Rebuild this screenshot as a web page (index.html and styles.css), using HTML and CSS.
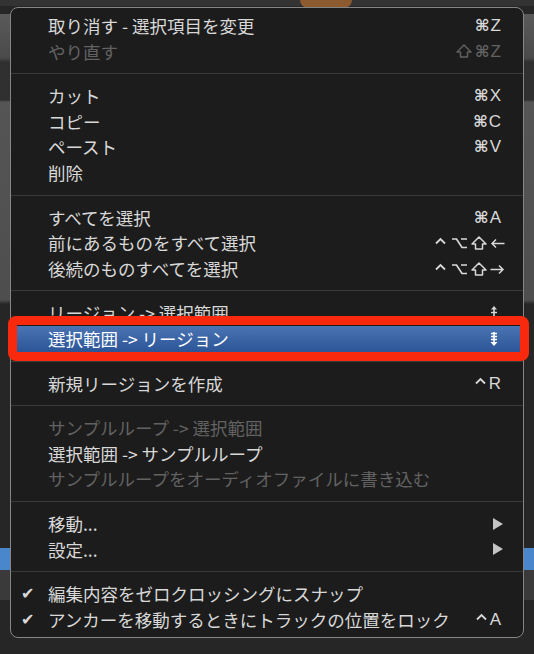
FILE: index.html
```html
<!DOCTYPE html>
<html lang="ja">
<head>
    <meta charset="UTF-8">
    <meta name="viewport" content="width=device-width, initial-scale=1.0">
    <title>編集メニュー</title>
    <link rel="stylesheet" href="styles.css">
</head>
<body>
    <div class="stage">
        <div class="blob"></div>

        <!-- EDIT MENU -->
        <div class="menu">
            <div class="row"><span class="label">取り消す - 選択項目を変更</span><span class="key"><span class="cmd">⌘</span>Z</span></div>
            <div class="row off">
                <span class="label">やり直す</span>
                <span class="key">
                    <svg class="mod" width="16" height="14" viewBox="0 0 16 14"><path d="M8 1 L15 8 H11.5 V13 H4.5 V8 H1 Z" fill="none" stroke="currentColor" stroke-width="1.4" stroke-linejoin="round"/></svg><span class="cmd">⌘</span>Z
                </span>
            </div>
            <div class="sep"></div>

            <div class="row"><span class="label">カット</span><span class="key"><span class="cmd">⌘</span>X</span></div>
            <div class="row"><span class="label">コピー</span><span class="key"><span class="cmd">⌘</span>C</span></div>
            <div class="row"><span class="label">ペースト</span><span class="key"><span class="cmd">⌘</span>V</span></div>
            <div class="row"><span class="label">削除</span></div>
            <div class="sep"></div>

            <div class="row"><span class="label">すべてを選択</span><span class="key"><span class="cmd">⌘</span>A</span></div>
            <div class="row">
                <span class="label">前にあるものをすべて選択</span>
                <span class="key arrows">
                    <svg class="mod ctl" width="11" height="14" viewBox="0 0 11 14"><path d="M1 7.5 L5.5 3 L10 7.5" fill="none" stroke="currentColor" stroke-width="1.8"/></svg>
                    <svg class="mod" width="17" height="14" viewBox="0 0 17 14"><path d="M1 3 H5.5 L11 11.5 H16 M10 3 H16" fill="none" stroke="currentColor" stroke-width="1.7"/></svg>
                    <svg class="mod" width="16" height="14" viewBox="0 0 16 14"><path d="M8 1 L15 8 H11.5 V13 H4.5 V8 H1 Z" fill="none" stroke="currentColor" stroke-width="1.5" stroke-linejoin="round"/></svg>
                    <svg class="mod" width="15" height="14" viewBox="0 0 15 14"><path d="M14.5 7.5 H2 M6 3.5 L2 7.5 L6 11.5" fill="none" stroke="currentColor" stroke-width="1.5"/></svg>
                </span>
            </div>
            <div class="row">
                <span class="label">後続のものすべてを選択</span>
                <span class="key arrows">
                    <svg class="mod ctl" width="11" height="14" viewBox="0 0 11 14"><path d="M1 7.5 L5.5 3 L10 7.5" fill="none" stroke="currentColor" stroke-width="1.8"/></svg>
                    <svg class="mod" width="17" height="14" viewBox="0 0 17 14"><path d="M1 3 H5.5 L11 11.5 H16 M10 3 H16" fill="none" stroke="currentColor" stroke-width="1.7"/></svg>
                    <svg class="mod" width="16" height="14" viewBox="0 0 16 14"><path d="M8 1 L15 8 H11.5 V13 H4.5 V8 H1 Z" fill="none" stroke="currentColor" stroke-width="1.5" stroke-linejoin="round"/></svg>
                    <svg class="mod" width="15" height="14" viewBox="0 0 15 14"><path d="M0.5 7.5 H13 M9 3.5 L13 7.5 L9 11.5" fill="none" stroke="currentColor" stroke-width="1.5"/></svg>
                </span>
            </div>
            <div class="sep"></div>

            <div class="row">
                <span class="label">リージョン -&gt; 選択範囲</span>
                <svg class="glyph" width="8" height="14" viewBox="0 0 8 14">
                    <path d="M4 0 L7 3.5 H1 Z" fill="currentColor"/>
                    <path d="M4 3 V11" stroke="currentColor" stroke-width="1.6"/>
                    <path d="M1 6.5 H7" stroke="currentColor" stroke-width="1.4"/>
                    <path d="M4 14 L7 10.5 H1 Z" fill="currentColor"/>
                </svg>
            </div>
            <div class="row hl">
                <span class="label">選択範囲 -&gt; リージョン</span>
                <svg class="glyph" width="8" height="14" viewBox="0 0 8 14">
                    <path d="M4 0 V11" stroke="currentColor" stroke-width="1.6"/>
                    <path d="M1 1.5 H7 M1 4.5 H7 M1 7.5 H7" stroke="currentColor" stroke-width="1.4"/>
                    <path d="M4 14 L7.5 10 H0.5 Z" fill="currentColor"/>
                </svg>
            </div>
            <div class="sep"></div>

            <div class="row">
                <span class="label">新規リージョンを作成</span>
                <span class="key"><svg class="mod ctl" width="11" height="14" viewBox="0 0 11 14"><path d="M1 7.5 L5.5 3 L10 7.5" fill="none" stroke="currentColor" stroke-width="1.8"/></svg>R</span>
            </div>
            <div class="sep"></div>

            <div class="row off"><span class="label">サンプルループ -&gt; 選択範囲</span></div>
            <div class="row"><span class="label">選択範囲 -&gt; サンプルループ</span></div>
            <div class="row off"><span class="label">サンプルループをオーディオファイルに書き込む</span></div>
            <div class="sep"></div>

            <div class="row"><span class="label">移動...</span><span class="sub"></span></div>
            <div class="row"><span class="label">設定...</span><span class="sub"></span></div>
            <div class="sep"></div>

            <div class="row"><span class="check">✔</span><span class="label">編集内容をゼロクロッシングにスナップ</span></div>
            <div class="row">
                <span class="check">✔</span>
                <span class="label">アンカーを移動するときにトラックの位置をロック</span>
                <span class="key"><svg class="mod ctl" width="11" height="14" viewBox="0 0 11 14"><path d="M1 7.5 L5.5 3 L10 7.5" fill="none" stroke="currentColor" stroke-width="1.8"/></svg>A</span>
            </div>
        </div>
    </div>
</body>
</html>
```

FILE: styles.css
```css
* { margin: 0; padding: 0; box-sizing: border-box; }
body {
    background: #262626;
    font-family: "Noto Sans CJK JP", "Noto Sans", sans-serif;
}
.stage {
    position: relative;
    width: 534px;
    height: 654px;
    overflow: hidden;
    padding: 7px 0 0 10px;
    background:
        linear-gradient(to bottom, transparent 548px, #4a86cc 548px, #4a86cc 570px, #3a3a3a 570px, #3a3a3a 600px, transparent 600px),
        linear-gradient(to bottom, #333 0, #333 6px, transparent 6px, transparent 14px, #5a5a5a 14px, #4a4a4a 58px, #303030 62px, #303030 100px, #555 102px, #4e4e4e 300px, transparent 304px),
        #262626;
}
.blob {
    position: absolute;
    left: 300px;
    top: -8px;
    width: 52px;
    height: 16px;
    border-radius: 10px;
    background: #8b5a2e;
}
.menu {
    position: relative;
    width: 514px;
    height: 631px;
    padding-top: 5px;
    background: #1c1c1c;
    border: 1px solid #858585;
    border-radius: 8px;
}
.row {
    position: relative;
    display: flex;
    align-items: center;
    height: 25.6px;
    padding: 0 22px 0 37px;
    font-size: 17.5px;
    line-height: 25.6px;
    color: #d8d8d8;
}
.row.off { color: #626262; }
.row.hl {
    color: #fff;
    background: linear-gradient(#4b74b4, #2b5597);
}
.row.hl::after {
    content: "";
    position: absolute;
    top: -10px;
    bottom: -9px;
    left: -3px;
    right: -6px;
    border: 9px solid #f8290d;
    border-radius: 8px;
}
.label { flex: 1; white-space: nowrap; }
.check {
    position: absolute;
    left: 10px;
    font-family: "DejaVu Sans", sans-serif;
    font-size: 16px;
    color: #d8d8d8;
}
.key {
    display: flex;
    align-items: center;
    gap: 3px;
    font-family: "Liberation Sans", "DejaVu Sans", sans-serif;
    font-size: 17px;
}
.cmd {
    font-family: "DejaVu Sans", sans-serif;
    font-size: 16px;
    font-weight: bold;
    margin-right: -2px;
}
.key.arrows { margin-right: -4px; }
.mod { display: block; }
.ctl { margin-right: 0; }
.arrows .ctl { margin-right: 2px; }
.glyph { margin-right: 3px; color: #d8d8d8; }
.hl .glyph { color: #fff; }
.sub {
    width: 0;
    height: 0;
    margin-right: -2px;
    border-left: 10px solid #c4c4c4;
    border-top: 6px solid transparent;
    border-bottom: 6px solid transparent;
}
.sep {
    margin: 9px 0;
    border-top: 1px solid #393939;
}
```
